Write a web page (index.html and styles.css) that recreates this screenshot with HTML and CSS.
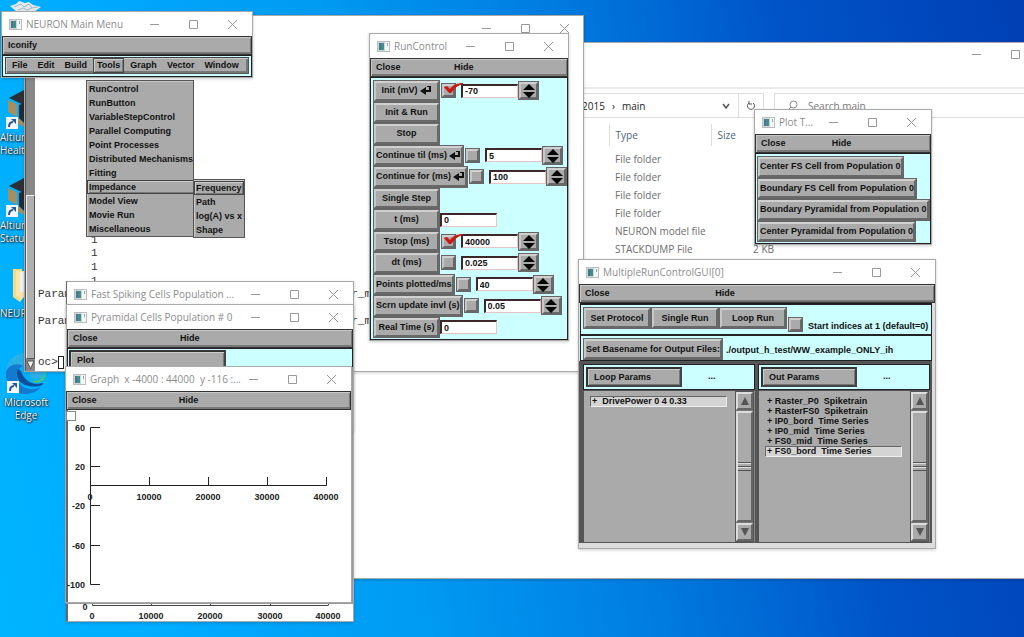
FILE: index.html
```
<!DOCTYPE html>
<html lang="en">
<head>
<meta charset="utf-8">
<title>NEURON desktop</title>
<link rel="stylesheet" href="styles.css">
</head>
<body>
<svg class="defs" aria-hidden="true">
  <defs>
    <symbol id="app" viewBox="0 0 13 11"><rect x=".5" y=".5" width="12" height="10" fill="#f4f6f6" stroke="#b9bdc0"/><rect x="1" y="1" width="7" height="9" fill="#cfd6d8"/><rect x="2" y="2" width="5" height="7" fill="#3f8f86"/><rect x="2" y="2" width="2" height="7" fill="#4a7396"/><path d="M10.500 2v3" stroke="#9aa3b5"/></symbol>
    <symbol id="min" viewBox="0 0 11 11"><path d="M1 5.500h9" stroke="#999" fill="none"/></symbol>
    <symbol id="max" viewBox="0 0 11 11"><path d="M1.500 1.500h8v8h-8z" stroke="#999" fill="none"/></symbol>
    <symbol id="cls" viewBox="0 0 11 11"><path d="M1 1l9 9M10 1l-9 9" stroke="#999" fill="none"/></symbol>
    <symbol id="enter" viewBox="0 0 12 11"><path d="M10 1v5H5" fill="none" stroke="#111" stroke-width="2"/><path d="M7 1.500h4" stroke="#111" stroke-width="1"/><path d="M0 6l6-4v8z" fill="#111"/></symbol>
    <symbol id="tick" viewBox="0 0 20 12"><path d="M1 5l3-1 3 3C10 3 14 1 20 1v1c-5 1-8 4-12 9l-2 0z" fill="#cc1810"/></symbol>
    <symbol id="spin" viewBox="0 0 12 14"><path d="M6 0l6 6H0zM6 14l6-6H0z" fill="#050505"/></symbol>
    <symbol id="hex" viewBox="0 0 32 38"><path d="M1 9L16 1l15 8-15 7z" fill="#2b3036"/><path d="M0 11l9 4v13l-9-5z" fill="#a38f62"/><path d="M11 16l5-2 10 4v12l-10 4-5-5z" fill="#252b31"/><path d="M9 28l7 6v4L3 30z" fill="#a38f62"/></symbol>
    <symbol id="short" viewBox="0 0 12 12"><rect width="12" height="12" fill="#f2f5f9"/><path d="M3 10c0-3 1-5 4-5" fill="none" stroke="#24579c" stroke-width="2"/><path d="M5 2h5v5z" fill="#24579c"/></symbol>
    <symbol id="up" viewBox="0 0 10 10"><path d="M5 1l4 8H1z" fill="#555"/></symbol>
    <symbol id="down" viewBox="0 0 10 10"><path d="M5 9l4-8H1z" fill="#555"/></symbol>
  </defs>
</svg>
<main class="desktop">
  <svg class="bin" viewBox="0 0 32 11" role="img" aria-label="Recycle Bin"><path d="M0 5l6-2 3-3 6 2 4-1 4 3 8 2-3 2-4 3H7z" fill="#e3ebf1"/><path d="M4 6l7-3 3 3 5-3 3 4 6-1M8 9l5-2 4 2 5-2" stroke="#a5b5c2" fill="none"/></svg>

  <div class="shortcut altium1">
    <svg class="pic"><use href="#hex"/></svg><svg class="arrow"><use href="#short"/></svg>
    <span>Altium<br>Health</span>
  </div>
  <div class="shortcut altium2">
    <svg class="pic"><use href="#hex"/></svg><svg class="arrow"><use href="#short"/></svg>
    <span>Altium<br>Status</span>
  </div>
  <div class="shortcut folder">
    <svg class="pic" viewBox="0 0 32 38"><path d="M5 2h9v30l-2 3-7-5z" fill="#f8d987"/><path d="M8 4h8v26l-3 3-5-5z" fill="#fbe6ab"/><path d="M12 5h10v20H12z" fill="#eef2f5"/></svg>
    <span>NEURON</span>
  </div>
  <div class="shortcut edge">
    <svg class="pic" viewBox="0 0 40 42"><path d="M0 20C1 8 9 1 20 1c12 0 20 8 20 17 0 6-5 9-10 9-6 0-7-3-6-6-3-6-10-9-15-6-5 1-8 4-9 8z" fill="#2bb0e6"/><path d="M24 28c7 3 14-1 16-9 0 4-1 8-3 9-4 4-10 3-13 0z" fill="#4cc768"/><path d="M0 20c2-7 11-10 17-6-6 3-8 9-5 15 3 7 13 11 23 6-4 5-10 7-16 7C8 42-1 33 0 20z" fill="#127bd0"/><path d="M12 17c-4 9 3 20 22 17 3-1 4-3 2-3-9 3-18-2-21-12z" fill="#0c4f9c"/></svg>
    <svg class="arrow"><use href="#short"/></svg>
    <span>Microsoft<br>Edge</span>
  </div>

  <section class="win explorer" aria-label="main">
    <header class="caption"><div class="ctl"><svg><use href="#min"/></svg><svg><use href="#max"/></svg></div></header>
    <div class="nav">
      <div class="address"><span>2015</span><span class="sep">›</span><span>main</span>
        <svg class="chev" viewBox="0 0 10 10"><path d="M2 3l3 4 3-4" fill="none" stroke="#555" stroke-width="1.500"/></svg>
        <button class="refresh" aria-label="Refresh"><svg viewBox="0 0 10 10"><path d="M7 2a3.500 3.500 0 1 1-4 0M3 0v3h3" fill="none" stroke="#555"/></svg></button>
      </div>
      <label class="search"><svg viewBox="0 0 12 12"><circle cx="7.500" cy="4.500" r="3.500" fill="none" stroke="#888"/><path d="M5 7l-4 4" stroke="#888"/></svg><input type="text" placeholder="Search main" aria-label="Search main"></label>
    </div>
    <table class="files">
      <thead><tr><th></th><th>Type</th><th>Size</th></tr></thead>
      <tbody>
        <tr><td></td><td>File folder</td><td></td></tr>
        <tr><td></td><td>File folder</td><td></td></tr>
        <tr><td></td><td>File folder</td><td></td></tr>
        <tr><td></td><td>File folder</td><td></td></tr>
        <tr><td></td><td>NEURON model file</td><td></td></tr>
        <tr><td></td><td>STACKDUMP File</td><td class="num">2 KB</td></tr>
      </tbody>
    </table>
  </section>

  <section class="win terminal" aria-label="Terminal">
    <header class="caption"><div class="ctl"><svg><use href="#min"/></svg><svg><use href="#max"/></svg><svg><use href="#cls"/></svg></div></header>
    <div class="termbody">
      <div class="termscroll"><i></i><svg viewBox="0 0 9 12"><path d="M1 2h7l-3.500 8z" fill="#eee" stroke="#555"/></svg></div>
      <div class="lines">
        <p></p><p></p><p></p><p></p><p></p><p></p><p></p><p></p><p></p><p></p><p></p><p></p>
        <p class="one">1</p><p class="one">1</p><p class="one">1</p><p class="one">1</p>
        <p class="par"><span>Param</span><span>r_m</span></p><p></p>
        <p class="par"><span>Param</span><span>r_m</span></p><p></p><p></p>
        <p>oc&gt;<i class="caret"></i></p>
      </div>
    </div>
  </section>

  <section class="win fast">
    <header class="caption"><svg class="app"><use href="#app"/></svg><h2>Fast Spiking Cells Population ...</h2><div class="ctl"><svg><use href="#min"/></svg><svg><use href="#max"/></svg><svg><use href="#cls"/></svg></div></header>
    <svg class="axis2" viewBox="0 0 285 24">
      <path d="M24.500 4v4.500h236M83.500 8v-4M142.500 8v-4M202.500 8v-4M260.500 8v-4" stroke="#444" fill="none"/>
      <g text-anchor="middle"><text x="17" y="13">0</text><text x="24" y="22">0</text><text x="83" y="22">10000</text><text x="142" y="22">20000</text><text x="202" y="22">30000</text><text x="260" y="22">40000</text></g>
    </svg>
  </section>

  <section class="win pyramidal">
    <header class="caption"><svg class="app"><use href="#app"/></svg><h2>Pyramidal Cells Population # 0</h2><div class="ctl"><svg><use href="#min"/></svg><svg><use href="#max"/></svg><svg><use href="#cls"/></svg></div></header>
    <nav class="bar"><button>Close</button><button>Hide</button></nav>
    <div class="panel"><button class="flat plotbtn">Plot</button></div>
  </section>

  <section class="win graph">
    <header class="caption"><svg class="app"><use href="#app"/></svg><h2>Graph&nbsp; x -4000 : 44000&nbsp; y -116 :...</h2><div class="ctl"><svg><use href="#min"/></svg><svg><use href="#max"/></svg><svg><use href="#cls"/></svg></div></header>
    <nav class="bar"><button>Close</button><button>Hide</button></nav>
    <svg class="axes" viewBox="0 0 285 190">
      <rect x=".5" y=".5" width="9" height="9" fill="#fff" stroke="#888"/>
      <path d="M34 16.500h-9.500v157h9.500M25 55.500h9M25 94.500h9M25 134.500h9M24 74.500h236.500V66M83.500 74v-8M142.500 74v-8M201.500 74v-8" fill="none" stroke="#222"/>
      <g text-anchor="end"><text x="19" y="20">60</text><text x="19" y="59">20</text><text x="19" y="98">-20</text><text x="19" y="138">-60</text><text x="19" y="177">-100</text></g>
      <g text-anchor="middle"><text x="24" y="89">0</text><text x="83" y="89">10000</text><text x="142" y="89">20000</text><text x="201" y="89">30000</text><text x="260" y="89">40000</text></g>
    </svg>
  </section>

  <section class="win mainmenu">
    <header class="caption"><svg class="app"><use href="#app"/></svg><h2>NEURON Main Menu</h2><div class="ctl"><svg><use href="#min"/></svg><svg><use href="#max"/></svg><svg><use href="#cls"/></svg></div></header>
    <nav class="bar"><button>Iconify</button></nav>
    <div class="panel menuwrap"><nav class="menus"><button>File</button><button>Edit</button><button>Build</button><button class="open">Tools</button><button>Graph</button><button>Vector</button><button>Window</button></nav></div>
  </section>
  <div class="menu tools"><button>RunControl</button><button>RunButton</button><button>VariableStepControl</button><button>Parallel Computing</button><button>Point Processes</button><button>Distributed Mechanisms</button><button>Fitting</button><button class="open">Impedance</button><button>Model View</button><button>Movie Run</button><button>Miscellaneous</button></div>
  <div class="menu sub"><button class="open">Frequency</button><button>Path</button><button>log(A) vs x</button><button>Shape</button></div>

  <section class="win run">
    <header class="caption"><svg class="app"><use href="#app"/></svg><h2>RunControl</h2><div class="ctl"><svg><use href="#min"/></svg><svg><use href="#max"/></svg><svg><use href="#cls"/></svg></div></header>
    <nav class="bar"><button>Close</button><button>Hide</button></nav>
    <form class="panel rows">
      <div class="row"><button type="button" class="btn">Init (mV)<svg class="enter"><use href="#enter"/></svg></button><label class="chk"><input type="checkbox" checked aria-label="Init changed"><svg><use href="#tick"/></svg></label><input class="field" value="-70" aria-label="Init (mV)"><button type="button" class="spin" aria-label="Step"><svg><use href="#spin"/></svg></button></div>
      <div class="row"><button type="button" class="btn">Init &amp; Run</button></div>
      <div class="row"><button type="button" class="btn">Stop</button></div>
      <div class="row"><button type="button" class="btn">Continue til (ms)<svg class="enter"><use href="#enter"/></svg></button><label class="chk"><input type="checkbox" aria-label="Continue til changed"></label><input class="field" value="5" aria-label="Continue til (ms)"><button type="button" class="spin" aria-label="Step"><svg><use href="#spin"/></svg></button></div>
      <div class="row"><button type="button" class="btn">Continue for (ms)<svg class="enter"><use href="#enter"/></svg></button><label class="chk"><input type="checkbox" aria-label="Continue for changed"></label><input class="field" value="100" aria-label="Continue for (ms)"><button type="button" class="spin" aria-label="Step"><svg><use href="#spin"/></svg></button></div>
      <div class="row"><button type="button" class="btn">Single Step</button></div>
      <div class="row"><button type="button" class="btn">t (ms)</button><input class="field" value="0" aria-label="t (ms)"></div>
      <div class="row"><button type="button" class="btn">Tstop (ms)</button><label class="chk"><input type="checkbox" checked aria-label="Tstop changed"><svg><use href="#tick"/></svg></label><input class="field" value="40000" aria-label="Tstop (ms)"><button type="button" class="spin" aria-label="Step"><svg><use href="#spin"/></svg></button></div>
      <div class="row"><button type="button" class="btn">dt (ms)</button><label class="chk"><input type="checkbox" aria-label="dt changed"></label><input class="field" value="0.025" aria-label="dt (ms)"><button type="button" class="spin" aria-label="Step"><svg><use href="#spin"/></svg></button></div>
      <div class="row"><button type="button" class="btn">Points plotted/ms</button><label class="chk"><input type="checkbox" aria-label="Points plotted changed"></label><input class="field" value="40" aria-label="Points plotted/ms"><button type="button" class="spin" aria-label="Step"><svg><use href="#spin"/></svg></button></div>
      <div class="row"><button type="button" class="btn">Scrn update invl (s)</button><label class="chk"><input type="checkbox" aria-label="Screen update changed"></label><input class="field" value="0.05" aria-label="Scrn update invl (s)"><button type="button" class="spin" aria-label="Step"><svg><use href="#spin"/></svg></button></div>
      <div class="row"><button type="button" class="btn">Real Time (s)</button><input class="field" value="0" aria-label="Real Time (s)"></div>
    </form>
  </section>

  <section class="win plot">
    <header class="caption"><svg class="app"><use href="#app"/></svg><h2>Plot T...</h2><div class="ctl"><svg><use href="#min"/></svg><svg><use href="#max"/></svg><svg><use href="#cls"/></svg></div></header>
    <nav class="bar"><button>Close</button><button>Hide</button></nav>
    <div class="panel rows">
      <div class="row"><button class="btn">Center FS Cell from Population 0</button></div>
      <div class="row"><button class="btn">Boundary FS Cell from Population 0</button></div>
      <div class="row"><button class="btn">Boundary Pyramidal from Population 0</button></div>
      <div class="row"><button class="btn">Center Pyramidal from Population 0</button></div>
    </div>
  </section>

  <section class="win multi">
    <header class="caption"><svg class="app"><use href="#app"/></svg><h2>MultipleRunControlGUI[0]</h2><div class="ctl"><svg><use href="#min"/></svg><svg><use href="#max"/></svg><svg><use href="#cls"/></svg></div></header>
    <nav class="bar"><button>Close</button><button>Hide</button></nav>
    <div class="stack">
      <div class="panel strip"><button class="btn">Set Protocol</button><button class="btn">Single Run</button><button class="btn">Loop Run</button><label class="chk low"><input type="checkbox"><span>Start indices at 1 (default=0)</span></label></div>
      <div class="panel strip"><button class="btn">Set Basename for Output Files:</button><span class="path">./output_h_test/WW_example_ONLY_ih</span></div>
      <div class="panes">
        <div class="pane">
          <div class="panel phead"><button class="flat">Loop Params</button><span>...</span></div>
          <div class="listbox"><ul class="loop"><li class="sel">+&nbsp; DrivePower 0 4 0.33</li></ul>
            <div class="scroll"><button aria-label="Scroll up"><svg><use href="#up"/></svg></button><i class="thumb"><b></b></i><button aria-label="Scroll down"><svg><use href="#down"/></svg></button></div></div>
        </div>
        <div class="pane">
          <div class="panel phead"><button class="flat">Out Params</button><span>...</span></div>
          <div class="listbox"><ul><li>+ Raster_P0&nbsp; Spiketrain</li><li>+ RasterFS0&nbsp; Spiketrain</li><li>+ IP0_bord&nbsp; Time Series</li><li>+ IP0_mid&nbsp; Time Series</li><li>+ FS0_mid&nbsp; Time Series</li><li class="sel">+ FS0_bord&nbsp; Time Series</li></ul>
            <div class="scroll"><button aria-label="Scroll up"><svg><use href="#up"/></svg></button><i class="thumb"><b></b></i><button aria-label="Scroll down"><svg><use href="#down"/></svg></button></div></div>
        </div>
      </div>
    </div>
  </section>
</main>
</body>
</html>
```
FILE: styles.css
```
* { box-sizing: border-box; }
body { margin: 0; font: bold 9px/11px "Liberation Sans", Arial, sans-serif; color: #111; }
button, input { font: inherit; color: inherit; margin: 0; border-radius: 0; }
button { padding: 0; border: 0; background: none; white-space: nowrap; }
svg { display: block; flex: none; }
h2, p, ul { margin: 0; padding: 0; }
.defs { position: absolute; width: 0; height: 0; }

.desktop {
  position: relative;
  min-height: 100vh;
  overflow: hidden;
  background: linear-gradient(80deg, #00b4ff 0%, #00acff 15%, #009af2 38%, #007ce0 58%, #0054c8 78%, #003fb4 100%);
}

/* desktop icons */
.bin { position: absolute; left: 10px; top: 1px; width: 32px; height: 11px; }
.shortcut { position: absolute; left: 0; font: 10px/13px "Open Sans", sans-serif; color: #fff; text-shadow: 1px 1px 2px #000, 0 0 1px #000; }
.shortcut .pic { width: 32px; height: 38px; margin-left: 8px; }
.shortcut span { display: block; padding-top: 4px; }
.arrow { position: absolute; left: 6px; top: 28px; width: 12px; height: 12px; }
.altium1 { top: 89px; }
.altium2 { top: 177px; }
.folder { top: 267px; }
.folder span { padding-top: 2px; }
.edge { top: 352px; left: 4px; text-align: center; }
.edge .pic { width: 40px; height: 42px; margin-left: 2px; }
.edge .arrow { left: 3px; top: 29px; }
.edge span { padding-top: 2px; }

/* window chrome */
.win { position: absolute; display: flex; flex-direction: column; background: #fff; border: 1px solid #a9a9a9; box-shadow: 0 1px 3px rgba(0, 0, 0, .2); }
.caption { display: flex; align-items: center; flex: none; height: 24px; padding-left: 7px; background: #fff; }
.caption .app { width: 13px; height: 11px; }
.caption h2 { flex: 1; padding-left: 4px; font: 10px/14px "Open Sans", sans-serif; color: #8c8c8c; white-space: nowrap; }
.ctl { display: flex; gap: 28px; margin-left: auto; padding-right: 14px; }
.ctl svg { width: 11px; height: 11px; }
.bar { display: flex; flex: none; height: 19px; padding-left: 5px; background: #aaa; border: 1px solid #333; box-shadow: inset 1px 1px #c8c8c8, inset -1px -2px #777; }
.bar button { text-align: left; }
.bar button:first-child:not(:last-child) { width: calc(33% + 15px); }
.panel { background: #cff; border: 1px solid #222; }

/* raised controls */
.btn, .spin, .chk input {
  border: 3px solid;
  border-color: #d0d0d0 #686868 #686868 #c8c8c8;
  background: #aaa;
  outline: 1px solid #666;
  outline-offset: -1px;
}
.btn { display: flex; align-items: center; justify-content: center; gap: 2px; min-width: 67px; }
.flat { background: #aaa; border: 2px solid; border-color: #333 #444 #444 #333; box-shadow: inset 1px 1px #ccc, inset -1px -1px #777; text-align: left; padding-left: 5px; }
.enter { width: 12px; height: 11px; }
.rows { display: grid; grid-auto-rows: 1fr; flex: 1; padding: 2px 0 1px 2px; }
.row { display: flex; align-items: center; }
.row .btn { align-self: stretch; }
.chk { position: relative; display: flex; margin-left: 1px; }
.chk input { appearance: none; width: 15px; height: 15px; }
.chk svg { position: absolute; left: 2px; top: -1px; width: 20px; height: 12px; }
.field { width: 57px; height: 14px; padding: 0 2px; border: 1px solid #e8c4c4; border-top: 2px solid #3c2828; border-left: 2px solid #3c2828; background: #fff; outline: 0; }
.chk + .field { margin-left: 5px; }
.spin { width: 21px; height: 19px; display: grid; place-items: center; }
.spin svg { width: 12px; height: 14px; }

/* file explorer */
.explorer { left: 340px; right: -19px; top: 42px; height: 537px; font: 10px/14px "Open Sans", sans-serif; color: #6d6d6d; }
.explorer .caption { height: 46px; align-items: flex-start; padding-top: 6px; border-bottom: 2px solid #eaeaea; }
.explorer .ctl { padding-right: 21px; }
.nav { display: flex; gap: 10px; padding-top: 4px; }
.address { display: flex; align-items: center; width: 423px; height: 25px; padding-left: 240px; border: 1px solid #ddd; color: #222; }
.address .sep { padding: 0 7px; }
.chev { width: 10px; height: 10px; margin-left: auto; margin-right: 7px; }
.refresh { display: grid; place-items: center; width: 25px; height: 23px; border-left: 1px solid #ddd; }
.refresh svg { width: 10px; height: 10px; }
.search { display: flex; align-items: center; flex: 1; padding-left: 11px; border: 1px solid #ddd; }
.search svg { width: 12px; height: 12px; }
.search input { flex: 1; border: 0; padding: 0 0 0 10px; outline: 0; }
.search input::placeholder { color: #777; opacity: 1; }
.files { margin-top: 6px; border-collapse: collapse; table-layout: fixed; width: 435px; }
.files th, .files td { height: 18px; padding: 0 0 0 6px; font-weight: normal; text-align: left; }
.files th { height: 22px; color: #4c6479; border-right: 1px solid #ddd; }
.files th:last-child { border: 0; }
.files th:first-child { width: 268px; }
.files th:nth-child(2) { width: 102px; }
.files thead::after { content: ""; display: block; height: 4px; }
.files td.num { text-align: right; padding-right: 2px; }

/* terminal */
.terminal { left: 24px; top: 15px; width: 560px; height: 357px; font: 11px/13px "Liberation Mono", monospace; color: #333; }
.terminal .ctl { padding-right: 13px; }
.termbody { display: flex; flex: 1; margin-top: 30px; }
.termscroll { display: flex; flex-direction: column; justify-content: flex-end; width: 10px; background: #888; border-left: 1px solid #555; }
.termscroll i { height: 164px; background: #b0b0b0; border: 1px solid; border-color: #eee #555 #555 #eee; }
.termscroll svg { width: 9px; height: 12px; }
.lines { display: grid; grid-auto-rows: 1fr; flex: 1; padding: 0 0 1px 3px; }
.one { padding-left: 53px; }
.par { display: flex; justify-content: space-between; width: 333px; }
.lines p:last-child { display: flex; }
.caret { width: 6px; height: 13px; border: 1px solid #222; }

/* graphs */
.graph { left: 65px; top: 366px; width: 287px; height: 237px; box-shadow: inset 2px 0 #666, 1px 1px #999; }
.axes { width: 285px; height: 190px; margin-top: 1px; }
.axes text, .axis2 text { font: bold 9px "Liberation Sans", Arial, sans-serif; fill: #222; }
.fast { left: 66px; top: 281px; width: 288px; height: 341px; border-left: 2px solid #666; }
.axis2 { width: 285px; height: 24px; margin-top: auto; }
.fast .caption { margin-left: -1px; }
.pyramidal { left: 66px; top: 304px; width: 288px; height: 127px; }
.pyramidal .panel { flex: 1; padding: 1px 0 0 1px; }
.plotbtn { width: 157px; height: 20px; padding-left: 6px; }

/* main menu */
.mainmenu { left: 1px; top: 11px; width: 252px; height: 67px; }
.menuwrap { flex: 1; padding: 1px 2px 2px; border-width: 1px; }
.menus { display: flex; gap: 2px; height: 100%; padding-left: 2px; background: #aaa; border: 1px solid; border-color: #444 #555 #555 #444; box-shadow: inset 1px 1px #c8c8c8, inset -2px -2px #777; }
.menus button { padding: 0 3px; border: 1px solid transparent; }
.menus .open, .menu .open { border: 1px solid #444; box-shadow: inset 1px 1px #ccc, inset -1px -1px #777; }
.menu { position: absolute; display: grid; grid-auto-rows: 1fr; padding-top: 1px; background: #aaa; border: 1px solid #555; box-shadow: inset 1px 1px #c8c8c8; }
.menu button { height: 14px; padding: 0 1px; border: 1px solid transparent; text-align: left; }
.tools { left: 86px; top: 80px; width: 108px; }
.sub { left: 193px; top: 179px; width: 52px; }

/* run control, plot tool */
.run { left: 369px; top: 33px; width: 200px; height: 308px; }
.plot { left: 754px; top: 109px; width: 178px; height: 136px; }
.plot .rows { padding-left: 1px; }

/* multiple run control */
.multi { left: 578px; top: 259px; width: 358px; height: 290px; }
.stack { display: flex; flex-direction: column; flex: 1; padding-right: 3px; background: #ddd; }
.strip { display: flex; height: 31px; margin-left: 1px; padding: 2px; border-width: 2px 1px 0; }
.strip .btn { height: 22px; min-width: 68px; }
.strip + .strip { height: 27px; border-bottom-width: 1px; }
.low { align-self: flex-end; }
.low span { padding: 4px 0 0 5px; }
.path { padding: 7px 0 0 3px; }
.panes { display: grid; grid-template-columns: 1fr 1fr; gap: 3px; flex: 1; padding: 3px 2px 0 4px; background: #555; border-bottom: 5px solid #ddd; }
.pane { display: flex; flex-direction: column; background: #aaa; }
.phead { display: flex; height: 26px; padding: 2px; }
.phead .flat { width: 96px; height: 20px; padding-left: 6px; }
.phead span { padding: 4px 0 0 26px; }
.listbox { display: flex; flex: 1; border: 1px solid #555; border-right-color: #888; }
.listbox ul { flex: 1; list-style: none; padding: 5px 8px 0 6px; line-height: 10px; }
.listbox li { height: 10px; padding-left: 2px; white-space: nowrap; }
.listbox .sel { height: 11px; background: #d4d4d4; border: 1px solid; border-color: #666 #eee #eee #666; padding-left: 1px; line-height: 9px; }
.scroll { display: flex; flex-direction: column; width: 19px; background: #777; border: 1px solid #555; }
.scroll button { display: grid; place-items: center; height: 18px; background: #aaa; border: 2px solid; border-color: #ddd #666 #666 #ddd; }
.scroll svg { width: 10px; height: 10px; }
.thumb { display: grid; align-items: center; flex: 1; margin: 1px 0; background: #aaa; border: 2px solid; border-color: #ddd #666 #666 #ddd; }
.thumb b { height: 9px; background: repeating-linear-gradient(#555 0 1px, #ddd 1px 2px, #aaa 2px 4px); }
```
